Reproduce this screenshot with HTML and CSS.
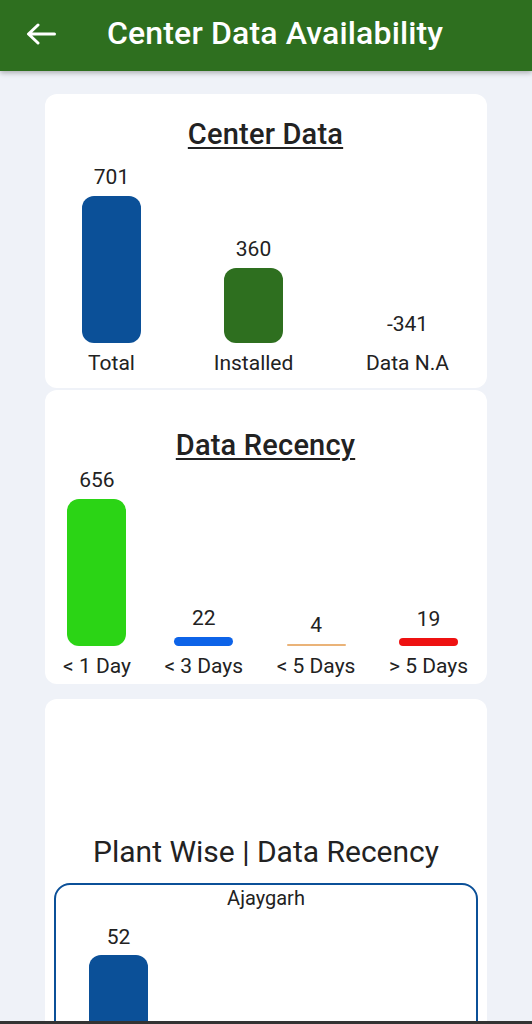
FILE: index.html
```html
<!DOCTYPE html>
<html lang="en">
<head>
<meta charset="utf-8">
<title>Center Data Availability</title>
<link rel="stylesheet" href="styles.css">
</head>
<body>
<header class="appbar">
  <svg class="back" width="30" height="22" viewBox="0 0 30 22" aria-hidden="true">
    <path d="M28.5 11H3 M12 2 L2.5 11 L12 20" fill="none" stroke="#ffffff" stroke-width="3" stroke-linecap="round" stroke-linejoin="round"/>
  </svg>
  <h1 class="appbar-title">Center Data Availability</h1>
</header>

<main class="content">
  <section class="card card-center">
    <h2 class="card-title underlined">Center Data</h2>
    <div class="chart chart-3">
      <div class="col">
        <span class="val">701</span>
        <span class="bar bar-navy" style="height:147px"></span>
        <span class="lbl">Total</span>
      </div>
      <div class="col">
        <span class="val">360</span>
        <span class="bar bar-green" style="height:75px"></span>
        <span class="lbl">Installed</span>
      </div>
      <div class="col">
        <span class="val">-341</span>
        <span class="bar" style="height:0"></span>
        <span class="lbl">Data N.A</span>
      </div>
    </div>
  </section>

  <section class="card card-recency">
    <h2 class="card-title underlined">Data Recency</h2>
    <div class="chart chart-4">
      <div class="col">
        <span class="val">656</span>
        <span class="bar bar-lime" style="height:147px"></span>
        <span class="lbl">&lt; 1 Day</span>
      </div>
      <div class="col">
        <span class="val">22</span>
        <span class="bar bar-blue thin" style="height:9px"></span>
        <span class="lbl">&lt; 3 Days</span>
      </div>
      <div class="col">
        <span class="val">4</span>
        <span class="bar bar-orange line" style="height:2px"></span>
        <span class="lbl">&lt; 5 Days</span>
      </div>
      <div class="col">
        <span class="val">19</span>
        <span class="bar bar-red thin" style="height:8px"></span>
        <span class="lbl">&gt; 5 Days</span>
      </div>
    </div>
  </section>

  <section class="card card-plant">
    <h2 class="plant-title">Plant Wise | Data Recency</h2>
    <div class="plant-box">
      <div class="plant-name">Ajaygarh</div>
      <div class="plant-chart">
        <div class="col">
          <span class="val">52</span>
          <span class="bar bar-navy" style="height:120px"></span>
        </div>
      </div>
    </div>
  </section>
</main>
<div class="navedge"></div>
</body>
</html>
```
FILE: styles.css
```css
* { box-sizing: border-box; }

html, body {
  margin: 0;
  padding: 0;
}

body {
  background: #eff2f8;
  font-family: Roboto, "Liberation Sans", Arial, sans-serif;
  color: #222222;
  overflow: hidden;
  height: 1024px;
}

.appbar {
  height: 71px;
  background: #2e6f1f;
  display: flex;
  align-items: center;
  padding-left: 26px;
  box-shadow: 0 2px 5px rgba(0, 0, 0, 0.28);
  position: relative;
  z-index: 2;
}

.back {
  display: block;
  margin-top: -3px;
}

.appbar-title {
  margin: -6px 0 0 51px;
  color: #ffffff;
  font-size: 32px;
  line-height: 38px;
  font-weight: 500;
  letter-spacing: 0.15px;
}

.content {
  padding: 23px 45px 0;
  display: flex;
  flex-direction: column;
}

.card {
  background: #ffffff;
  border-radius: 12px;
}

.card-center {
  height: 294px;
  padding: 23px 38px 0 37px;
}

.card-recency {
  margin-top: 2px;
  height: 294px;
  padding: 38px 19px 0 18px;
}

.card-title {
  margin: 0;
  text-align: center;
  font-size: 29px;
  line-height: 34px;
  font-weight: 500;
  color: #222222;
  letter-spacing: 0.2px;
}

.underlined {
  text-decoration: underline;
  text-decoration-thickness: 2px;
  text-underline-offset: 3px;
}

.chart {
  display: flex;
  justify-content: space-between;
  align-items: flex-end;
}

.chart-3 { margin-top: 14px; }
.chart-4 { margin-top: 6px; }

.col {
  display: flex;
  flex-direction: column;
  align-items: center;
  min-width: 59px;
}

.val, .lbl {
  font-size: 21px;
  line-height: 24px;
  white-space: nowrap;
  color: #222222;
}

.val { margin-bottom: 7px; }
.lbl { margin-top: 8px; }

.bar {
  display: block;
  width: 59px;
  border-radius: 12px;
}

.bar.thin { border-radius: 5px; }
.bar.line { border-radius: 1px; }

.bar-navy { background: #0b5098; }
.bar-green { background: #2e6f1f; }
.bar-lime { background: #2bd415; }
.bar-blue { background: #0d63e8; }
.bar-orange { background: #eab378; }
.bar-red { background: #ee1111; }

.card-plant {
  margin-top: 15px;
  padding: 136px 9px 0;
  height: 400px;
}

.plant-title {
  margin: 0;
  text-align: center;
  font-size: 30px;
  line-height: 34px;
  font-weight: 400;
  color: #222222;
}

.plant-box {
  margin-top: 14px;
  border: 2px solid #0b5098;
  border-radius: 16px;
  height: 300px;
  padding: 1px 0 0 33px;
}

.plant-name {
  text-align: center;
  font-size: 20px;
  line-height: 24px;
  margin-left: -33px;
}

.plant-chart {
  margin-top: 15px;
  display: flex;
}

.plant-chart .val { margin-bottom: 6px; }

.navedge {
  position: fixed;
  left: 0;
  right: 0;
  bottom: 0;
  height: 3px;
  background: #333333;
}
```
